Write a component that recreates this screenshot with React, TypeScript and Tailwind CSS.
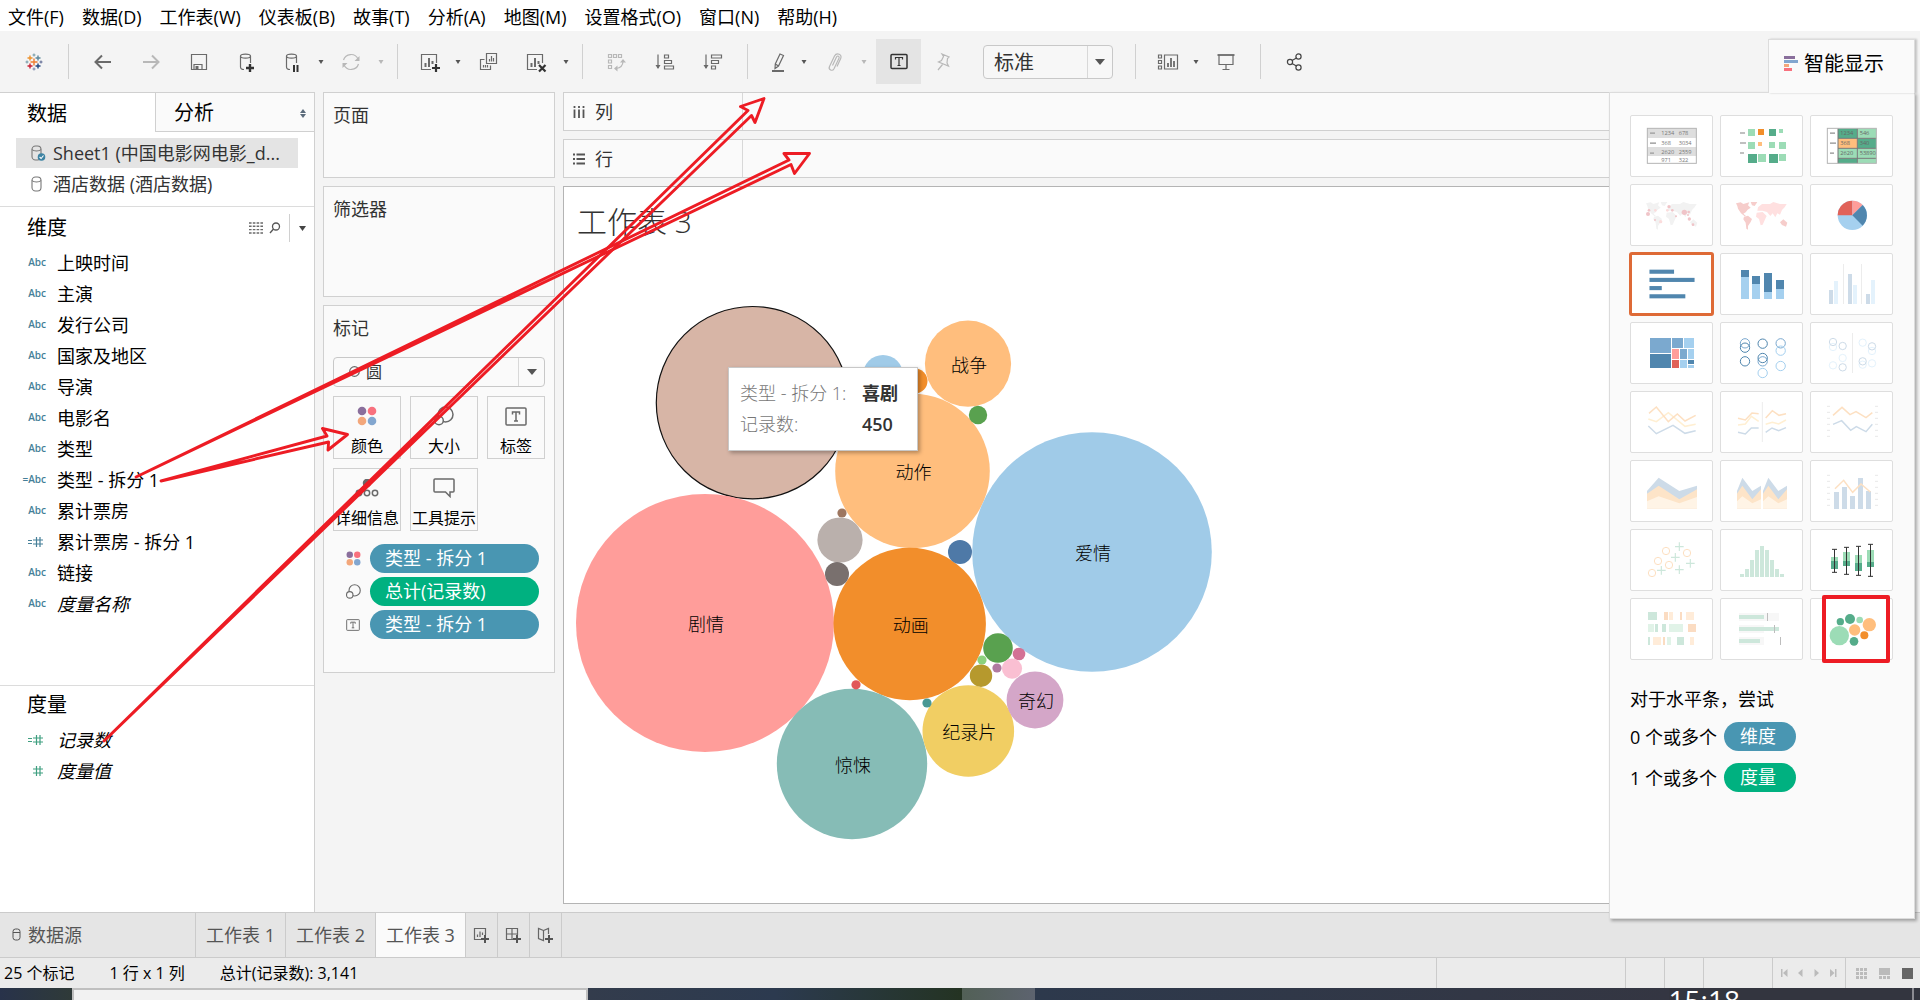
import React from 'react';

const GREY = '#6a6a6a';
const LIGHT = '#b8b8b8';

const menus = [
  '文件(F)',
  '数据(D)',
  '工作表(W)',
  '仪表板(B)',
  '故事(T)',
  '分析(A)',
  '地图(M)',
  '设置格式(O)',
  '窗口(N)',
  '帮助(H)'
];

const dimensions = [
  { name: '上映时间', type: 'abc' },
  { name: '主演', type: 'abc' },
  { name: '发行公司', type: 'abc' },
  { name: '国家及地区', type: 'abc' },
  { name: '导演', type: 'abc' },
  { name: '电影名', type: 'abc' },
  { name: '类型', type: 'abc' },
  { name: '类型 - 拆分 1', type: 'abc', calc: true },
  { name: '累计票房', type: 'abc' },
  { name: '累计票房 - 拆分 1', type: 'num', calc: true },
  { name: '链接', type: 'abc' },
  { name: '度量名称', type: 'abc', italic: true }
];

const measures = [
  { name: '记录数', type: 'num', calc: true, italic: true },
  { name: '度量值', type: 'num', italic: true }
];

const bubbles = [
  { x: 883, y: 375, r: 20, fill: '#a0cbe8' },
  { x: 915, y: 381, r: 12.5, fill: '#f28e2b' },
  { x: 705, y: 623, r: 129, fill: '#ff9d9a', label: '剧情' },
  { x: 912.5, y: 471, r: 77.3, fill: '#ffbe7d', label: '动作' },
  { x: 1092, y: 552, r: 119.8, fill: '#a0cbe8', label: '爱情' },
  { x: 909.7, y: 624, r: 76.2, fill: '#f28e2b', label: '动画' },
  { x: 968, y: 363.7, r: 43.1, fill: '#ffbe7d', label: '战争' },
  { x: 852, y: 764, r: 75.2, fill: '#86bcb6', label: '惊悚' },
  { x: 968.3, y: 731, r: 45.8, fill: '#f1ce63', label: '纪录片' },
  { x: 1035, y: 700, r: 28.4, fill: '#d4a6c8', label: '奇幻' },
  { x: 978, y: 415, r: 9.2, fill: '#59a14f' },
  { x: 842, y: 513, r: 4.6, fill: '#9d7660' },
  { x: 840, y: 540, r: 22.6, fill: '#bab0ac' },
  { x: 837, y: 574, r: 12, fill: '#79706e' },
  { x: 960, y: 552, r: 12, fill: '#4e79a7' },
  { x: 998, y: 648, r: 14.8, fill: '#59a14f' },
  { x: 1019, y: 654, r: 6.3, fill: '#d37295' },
  { x: 1012, y: 668.6, r: 10.1, fill: '#fabfd2' },
  { x: 997, y: 668, r: 4.6, fill: '#b07aa1' },
  { x: 982, y: 660, r: 4.6, fill: '#8cd17d' },
  { x: 981, y: 675.7, r: 11.2, fill: '#b6992d' },
  { x: 856, y: 684.8, r: 4.6, fill: '#e15759' },
  { x: 927, y: 703, r: 4.6, fill: '#499894' }
];

const Svg: React.FC<{ children: React.ReactNode; color?: string }> = ({
  children,
  color = GREY
}) => (
  <svg
    width="24"
    height="24"
    viewBox="0 0 24 24"
    fill="none"
    stroke={color}
    strokeWidth="1.2"
    className="shrink-0"
  >
    {children}
  </svg>
);

const Tool: React.FC<{
  label: string;
  width?: string;
  children: React.ReactNode;
}> = ({ label, width = 'w-12', children }) => (
  <button
    aria-label={label}
    className={`${width} h-[45px] shrink-0 flex items-center justify-center`}
  >
    {children}
  </button>
);

const Caret: React.FC<{ color?: string }> = ({ color = '#555' }) => (
  <span className="w-3 shrink-0 flex justify-center">
    <svg width="6" height="4" viewBox="0 0 6 4" fill={color}>
      <path d="M0.5 0h5L3 4z" />
    </svg>
  </span>
);

const Sep = () => <span className="w-px h-[35px] mx-2.5 shrink-0 bg-[#d0d0d0]" />;

const plus = (x: number, y: number, s: number, color: string, w = 1.4) => (
  <path
    d={`M${x - s} ${y}h${s * 2}M${x} ${y - s}v${s * 2}`}
    stroke={color}
    strokeWidth={w}
  />
);

const ColorDots: React.FC<{ size: number }> = ({ size }) => (
  <svg width={size} height={size} viewBox="0 0 20 20">
    <circle cx="5" cy="5" r="4.3" fill="#8a6f9c" />
    <circle cx="15" cy="5" r="4.3" fill="#f8717e" />
    <circle cx="5" cy="15" r="4.3" fill="#f3a77b" />
    <circle cx="15" cy="15" r="4.3" fill="#82a6cf" />
  </svg>
);

const SizeIcon: React.FC<{ size: number }> = ({ size }) => (
  <svg
    width={size}
    height={size}
    viewBox="0 0 20 20"
    fill="#fafafa"
    stroke={GREY}
    strokeWidth="1.5"
  >
    <circle cx="11.5" cy="8.5" r="7.5" />
    <circle cx="5" cy="14.5" r="4.3" />
  </svg>
);

const TextIcon: React.FC<{ width: number; height: number }> = ({
  width,
  height
}) => (
  <svg
    width={width}
    height={height}
    viewBox="0 0 22 19"
    fill="none"
    stroke={GREY}
    strokeWidth="1.5"
  >
    <rect x="1" y="1" width="20" height="17" rx="1" />
    <path d="M7.5 7.5V5h7v2.5M11 5v9M9 14h4" />
  </svg>
);

const Cylinder: React.FC<{ checked?: boolean }> = ({ checked }) => (
  <svg
    width="16"
    height="18"
    viewBox="0 0 16 18"
    fill="none"
    stroke="#777"
    strokeWidth="1.1"
  >
    <rect x="2" y="2" width="9" height="14" rx="3.5" />
    <path d="M2 5.5c1.500 2 7.500 2 9 0" />
    {checked && (
      <g>
        <circle cx="11.500" cy="13" r="3.800" fill="#3d83a3" stroke="none" />
        <path d="M9.600 13l1.500 1.500 2.400-3" stroke="#fff" />
      </g>
    )}
  </svg>
);

const TypeIcon: React.FC<{ type: string; calc?: boolean; color: string }> = ({
  type,
  calc,
  color
}) =>
  type === 'abc' ? (
    <span className="text-[10px] font-semibold text-[#457f98]">
      {calc ? '=Abc' : 'Abc'}
    </span>
  ) : (
    <svg
      width="21"
      height="14"
      viewBox="0 0 21 14"
      fill="none"
      stroke={color}
      strokeWidth="1.2"
    >
      {calc && <path d="M3 5.500h4M3 8.500h4" />}
      <path d="M8 5h10M8 9h10M11.500 2v10M15 2v10" />
    </svg>
  );

const FieldList: React.FC<{ fields: any[]; color: string }> = ({
  fields,
  color
}) => (
  <ul>
    {fields.map((field) => (
      <li key={field.name} className="h-[31px] flex items-center">
        <span className="w-[46px] flex justify-end">
          <TypeIcon type={field.type} calc={field.calc} color={color} />
        </span>
        <span className={`ml-[11px] text-lg ${field.italic ? 'italic' : ''}`}>
          {field.name}
        </span>
      </li>
    ))}
  </ul>
);

const Pill: React.FC<{ icon: React.ReactNode; color: string; text: string }> = ({
  icon,
  color,
  text
}) => (
  <li className="flex items-center">
    <span className="w-[37px] pl-[13px] flex items-center">{icon}</span>
    <span
      className={`${color} flex-1 h-[29px] mr-[6px] pl-[15px] rounded-full text-lg leading-[28px] text-white`}
    >
      {text}
    </span>
  </li>
);

const MarkButton: React.FC<{
  label: string;
  width?: string;
  children: React.ReactNode;
}> = ({ label, width = 'w-[68px]', children }) => (
  <button
    className={`${width} h-[63px] border border-[#d0d0d0] flex flex-col items-center justify-between pt-2`}
  >
    <span className="h-[22px] flex items-center">{children}</span>
    <span className="text-base leading-6 whitespace-nowrap">{label}</span>
  </button>
);

const continents = (
  <g>
    <path d="M48 58l14-3 8 5 18-5-4 9 8 7-9 6-6 8-7 4 8 7-4 1-11-9-9-14-2-8z" />
    <path d="M92 54h20l-8 12-8-2z" />
    <path d="M72 98l12-3 12 10-4 9-8 12v11l-5-3-2-18-7-10z" />
  </g>
);

const oldWorld = (
  <g>
    <path d="M110 86l18-2 12 12-4 8-8 18-6 2-5-19-9-7z" />
    <path d="M112 80l2-10 12-10h24l10-6 20 6h20l-6 10-8 8-6 14-8-4-6 12-8-12-7 8-10-12-14-4z" />
  </g>
);

const australia = <path d="M180 115l10-9 12 10-4 12-12-5z" />;

const bars = (list: number[][], fill: string) =>
  list.map((b, i) => (
    <rect key={i} x={b[0]} y={b[1]} width={b[2]} height={b[3]} fill={fill} />
  ));

const rings = (list: number[][], stroke: string, r: number, w = 3) =>
  list.map((c, i) => (
    <circle
      key={i}
      cx={c[0]}
      cy={c[1]}
      r={r}
      fill="none"
      stroke={stroke}
      strokeWidth={w}
    />
  ));

const ticks = (
  <path
    d="M51 46h9M51 64h9M51 82h9M51 100h9M51 118h9M51 136h9M195 46h9M195 64h9M195 82h9M195 100h9M195 118h9M195 136h9"
    stroke="#e8e8e8"
    strokeWidth="3"
  />
);

const thumbs = [
  {
    name: '文本表',
    art: (
      <g>
        <rect x="52" y="40" width="147" height="105" fill="#fff" />
        <rect x="52" y="40" width="147" height="29" fill="#dedede" />
        <rect x="52" y="96" width="147" height="27" fill="#dedede" />
        <rect x="52" y="40" width="147" height="105" fill="none" stroke="#b4b4b4" strokeWidth="3" />
        {bars([[60, 52, 15, 5], [60, 82, 18, 5], [60, 112, 12, 5]], '#ababab')}
        <g fontSize="17" fill="#777">
          <text x="94" y="61">1234</text>
          <text x="146" y="61">678</text>
          <text x="94" y="89">368</text>
          <text x="146" y="89">3034</text>
          <text x="94" y="116">2620</text>
          <text x="146" y="116">2559</text>
          <text x="94" y="140">971</text>
          <text x="146" y="140">322</text>
        </g>
      </g>
    )
  },
  {
    name: '热图',
    art: (
      <g>
        {bars([[60, 51, 15, 6], [60, 81, 18, 6], [60, 111, 12, 6]], '#c0c0c0')}
        {bars([[84, 42, 21, 21], [177, 42, 12, 12], [84, 81, 21, 21], [147, 81, 18, 18], [177, 81, 21, 21], [114, 117, 24, 24], [177, 117, 21, 21]], '#9cdcb6')}
        {bars([[147, 42, 21, 21], [84, 117, 27, 27], [147, 117, 27, 27]], '#55ac8a')}
        {bars([[114, 42, 18, 18]], '#f28e2b')}
        {bars([[114, 81, 12, 12]], '#ffbe7d')}
      </g>
    )
  },
  {
    name: '突出显示表',
    art: (
      <g>
        <rect x="52" y="40" width="147" height="105" fill="#fff" />
        {bars([[84, 40, 58, 30], [142, 70, 57, 30], [84, 130, 58, 15]], '#55ac8a')}
        {bars([[142, 40, 57, 30], [84, 100, 58, 30], [142, 100, 57, 30], [142, 130, 57, 15]], '#9cdcb6')}
        {bars([[84, 70, 58, 30]], '#ffbe7d')}
        <path d="M84 40v105M142 40v105M84 70h115M84 100h115M84 130h115" stroke="#777" strokeWidth="3" />
        <rect x="52" y="40" width="147" height="105" fill="none" stroke="#b4b4b4" strokeWidth="3" />
        {bars([[60, 52, 15, 5], [60, 82, 18, 5], [60, 112, 12, 5]], '#ababab')}
        <g fontSize="17" fill="#666">
          <text x="91" y="60">1234</text>
          <text x="149" y="60">546</text>
          <text x="91" y="91">368</text>
          <text x="149" y="91">340</text>
          <text x="91" y="121">2620</text>
          <text x="149" y="121">53890</text>
        </g>
      </g>
    )
  },
  {
    name: '符号地图',
    art: (
      <g fill="#f2f2f2">
        {continents}
        {oldWorld}
        {australia}
        <g fill="#f0c4c8">
          <circle cx="54" cy="90" r="6" />
          <circle cx="57" cy="79" r="4" />
          <circle cx="117" cy="68" r="5" />
          <circle cx="127" cy="79" r="4" />
          <circle cx="163" cy="85" r="8" />
          <circle cx="176" cy="84" r="4" />
          <circle cx="178" cy="105" r="5" />
          <circle cx="189" cy="122" r="4" />
          <circle cx="138" cy="97" r="3" />
          <circle cx="75" cy="108" r="3" />
          <circle cx="174" cy="93" r="3" />
        </g>
        <g fill="#fbdcdc">
          <circle cx="76" cy="79" r="4" />
          <circle cx="112" cy="79" r="4" />
          <circle cx="92" cy="113" r="5" />
        </g>
      </g>
    )
  },
  {
    name: '填充地图',
    art: (
      <g>
        <g fill="#f6cdcb">
          {continents}
          {australia}
        </g>
        <g fill="#ffe0e0">{oldWorld}</g>
      </g>
    )
  },
  {
    name: '饼图',
    art: (
      <g>
        <circle cx="127" cy="94" r="44" fill="#a5d0ef" />
        <path d="M127 94V50a44 44 0 0 0-44 44z" fill="#e16259" />
        <path d="M127 94V50a44 44 0 0 1 31 13z" fill="#ff9d9a" />
        <path d="M127 94l31-31a44 44 0 0 1 0 62z" fill="#5086ae" />
      </g>
    )
  },
  {
    name: '水平条',
    selected: true,
    art: <g>{bars([[60, 51, 72, 12], [60, 75, 132, 12], [60, 99, 36, 12], [60, 123, 105, 12]], '#5086ae')}</g>
  },
  {
    name: '堆叠条',
    art: (
      <g>
        {bars([[63, 51, 24, 21], [96, 69, 24, 24], [132, 60, 24, 57], [168, 81, 24, 27]], '#5086ae')}
        {bars([[63, 72, 24, 66], [96, 93, 24, 45], [132, 117, 24, 21], [168, 108, 24, 30]], '#a5d0ef')}
      </g>
    )
  },
  {
    name: '并排条',
    art: (
      <g>
        {bars([[99, 33, 3, 120], [153, 33, 3, 120]], '#ececec')}
        {bars([[57, 111, 12, 42], [114, 63, 12, 90], [168, 123, 12, 30]], '#cddbe8')}
        {bars([[72, 84, 12, 69], [129, 96, 12, 57], [183, 81, 12, 72]], '#e4f2fc')}
      </g>
    )
  },
  {
    name: '树状图',
    art: (
      <g>
        {bars([[60, 48, 63, 45], [126, 48, 33, 30], [150, 81, 21, 30]], '#7ba9cf')}
        {bars([[60, 96, 63, 42], [174, 114, 18, 12]], '#5086ae')}
        {bars([[162, 48, 30, 30], [174, 81, 18, 30], [150, 114, 21, 24], [174, 129, 18, 9]], '#a5d0ef')}
        {bars([[126, 81, 21, 30]], '#ff9d9a')}
        {bars([[126, 114, 21, 24]], '#e16259')}
      </g>
    )
  },
  {
    name: '圆视图',
    art: (
      <g>
        {rings([[75, 64], [182, 64], [128, 118]], '#7ba9cf', 14)}
        {rings([[182, 86], [182, 132], [128, 153]], '#a5d0ef', 14)}
        {rings([[75, 77], [75, 118], [128, 65], [128, 108]], '#5086ae', 14)}
      </g>
    )
  },
  {
    name: '并排圆',
    art: (
      <g>
        {bars([[126, 33, 3, 120]], '#ececec')}
        {rings([[69, 75], [98, 108], [69, 130], [158, 62], [186, 87], [158, 128], [186, 124]], '#e4f2fc', 11)}
        {rings([[69, 60], [98, 72], [98, 136], [186, 73], [158, 118]], '#cddbe8', 11)}
      </g>
    )
  },
  {
    name: '连续线',
    art: (
      <g fill="none" strokeWidth="4.500">
        <path d="M55 84l24 8 36-27 50 41 32-6" stroke="#ffefd2" />
        <path d="M57 67l22-19 36 44 27-23 23 21 32-17" stroke="#fde0c2" />
        <path d="M55 105l24 23 50-25 36 24 32-8" stroke="#cddbe8" />
      </g>
    )
  },
  {
    name: '离散线',
    art: (
      <g fill="none" strokeWidth="4.500">
        <path d="M127 33v120" stroke="#ececec" strokeWidth="3" />
        <path d="M54 102l22-3 18-23 22 15M137 100l20-6 19 5 22-12" stroke="#ffefd2" />
        <path d="M54 82l22 5 20-21 20 2M137 81l20-22 20 14 21-5" stroke="#fde0c2" />
        <path d="M54 124l22 5 18-18h22M137 124l19-13 20 8 22-9" stroke="#cddbe8" />
      </g>
    )
  },
  {
    name: '双线',
    art: (
      <g fill="none" strokeWidth="4.500">
        {ticks}
        <path d="M69 73l27-24 24 22 18-9 30 18 19-15" stroke="#fde0c2" />
        <path d="M69 100l26-11 27 29 17-11 29 15 19-22" stroke="#cddbe8" />
      </g>
    )
  },
  {
    name: '连续面积图',
    art: (
      <g>
        <path d="M51 93l35-40 62 40 53-16v69H51z" fill="#cddbe8" />
        <path d="M51 101l35-24 62 41 53-30v58H51z" fill="#fde4c8" />
        <path d="M51 124l35-15 62 21 53-19v35H51z" fill="#fff4e6" />
      </g>
    )
  },
  {
    name: '离散面积图',
    art: (
      <g>
        <path d="M51 93l16-40 30 40 26-16v69H51zM129 93l16-40 30 40 26-16v69h-72z" fill="#cddbe8" />
        <path d="M51 101l16-24 30 41 26-30v58H51zM129 101l16-24 30 41 26-30v58h-72z" fill="#fde4c8" />
        <path d="M51 124l16-15 30 21 26-12v28H51zM129 124l16-15 30 21 26-12v28h-72z" fill="#fff4e6" />
      </g>
    )
  },
  {
    name: '双组合',
    art: (
      <g fill="none">
        {ticks}
        {bars([[72, 96, 15, 51], [96, 81, 15, 66], [120, 108, 15, 39], [144, 54, 15, 93], [168, 93, 15, 54]], '#cddbe8')}
        <path d="M75 86l26-25 27 36 25-25 28 24" stroke="#fde0c2" strokeWidth="4.500" />
      </g>
    )
  },
  {
    name: '散点图',
    art: (
      <g>
        {rings([[108, 66], [171, 72], [84, 96], [117, 108], [66, 132]], '#fde0c2', 11)}
        <path
          d="M135 53h26M148 40v26M123 85h26M136 72v26M168 103h26M181 90v26M135 122h26M148 109v26M81 124h26M94 111v26"
          stroke="#cde7db"
          strokeWidth="3.500"
        />
      </g>
    )
  },
  {
    name: '直方图',
    art: (
      <g>
        {bars([[60, 135, 12, 9], [75, 120, 12, 24], [90, 93, 12, 51], [105, 63, 12, 81], [120, 51, 12, 93], [135, 63, 12, 81], [150, 93, 12, 51], [165, 120, 12, 24], [180, 135, 12, 9]], '#cde7db')}
      </g>
    )
  },
  {
    name: '盒须图',
    art: (
      <g>
        {bars([[63, 84, 21, 12], [99, 69, 21, 27], [135, 78, 21, 24], [171, 63, 21, 36]], '#9cdcb6')}
        {bars([[63, 96, 21, 24], [99, 96, 21, 15], [135, 102, 21, 24], [171, 99, 21, 15]], '#55ac8a')}
        <path
          d="M66 61h15M73.500 61v69M66 130h15M102 55h15M109.500 55v81M102 136h15M138 52h15M145.500 52v87M138 139h15M174 46h15M181.500 46v96M174 142h15"
          stroke="#333"
          strokeWidth="3"
        />
      </g>
    )
  },
  {
    name: '甘特图',
    art: (
      <g>
        {bars([[54, 42, 27, 24], [75, 78, 9, 24], [96, 78, 12, 24], [54, 117, 6, 24], [141, 117, 21, 24]], '#cde7db')}
        {bars([[54, 78, 18, 24], [117, 78, 42, 24], [111, 117, 12, 24]], '#e1f3e8')}
        {bars([[102, 42, 12, 24], [150, 42, 6, 24], [174, 78, 24, 24], [99, 117, 6, 24]], '#fbdcc2')}
        {bars([[117, 42, 12, 24], [168, 42, 24, 24], [69, 117, 24, 24], [180, 117, 12, 24]], '#ffecd9')}
      </g>
    )
  },
  {
    name: '靶心图',
    art: (
      <g>
        {bars([[57, 45, 120, 24], [57, 81, 75, 24], [57, 117, 75, 24]], '#f7f7f7')}
        {bars([[57, 51, 75, 12], [57, 87, 120, 12], [57, 123, 63, 12]], '#cde7db')}
        {bars([[141, 45, 3, 24], [162, 81, 3, 24], [180, 117, 3, 24]], '#bdbdbd')}
      </g>
    )
  },
  {
    name: '填充气泡图',
    marked: true,
    art: (
      <g>
        <circle cx="88" cy="113" r="29" fill="#9cdcb6" />
        <circle cx="149" cy="66" r="10" fill="#9cdcb6" />
        <circle cx="91" cy="71" r="11" fill="#55ac8a" />
        <circle cx="120" cy="63" r="15" fill="#55ac8a" />
        <circle cx="132" cy="130" r="13" fill="#55ac8a" />
        <circle cx="134" cy="96" r="17" fill="#ffbe7d" />
        <circle cx="178" cy="80" r="20" fill="#ffbe7d" />
        <circle cx="163" cy="112" r="12" fill="#f28e2b" />
      </g>
    )
  }
];

const Toolbar = () => (
  <div className="h-[61px] pl-2.5 flex items-center bg-[#f4f4f4]">
    <Tool label="Tableau">
      <Svg>
        {plus(12, 12, 3.5, '#ee7d31')}
        {plus(8, 8, 2.5, '#eb912c')}
        {plus(16, 8, 2.5, '#5b879b')}
        {plus(8, 16, 2.5, '#c72035')}
        {plus(16, 16, 2.5, '#1f447e')}
        {plus(12, 5, 1.5, '#7099a6', 1)}
        {plus(12, 19, 1.5, '#7b86aa', 1)}
        {plus(5, 12, 1.5, '#7099a6', 1)}
        {plus(19, 12, 1.5, '#59658f', 1)}
      </Svg>
    </Tool>
    <Sep />
    <Tool label="后退">
      <Svg>
        <path d="M20 12H5M11 5.500L4.500 12l6.500 6.500" strokeWidth="2" />
      </Svg>
    </Tool>
    <Tool label="前进">
      <Svg color={LIGHT}>
        <path d="M4 12h15M13 5.500l6.500 6.500-6.500 6.500" strokeWidth="2" />
      </Svg>
    </Tool>
    <Tool label="保存">
      <Svg>
        <path d="M4.500 4.500h15v15h-15zM7 19v-4.500h8V19" />
        <rect x="8.500" y="16" width="3" height="3" fill={GREY} stroke="none" />
      </Svg>
    </Tool>
    <Tool label="新建数据源">
      <Svg>
        <path d="M9 19.500c-2 0-3.500-1-3.500-2.500V6c0-2.600 10-2.600 10 0v7M5.500 6c0 2.800 10 2.800 10 0" />
        {plus(15, 18, 4, '#333', 2.4)}
      </Svg>
    </Tool>
    <Tool label="暂停自动更新" width="w-11">
      <Svg>
        <path d="M9 19.500c-2 0-3.500-1-3.500-2.500V6c0-2.600 10-2.600 10 0v7M5.500 6c0 2.800 10 2.800 10 0" />
        <path d="M13 15v7M16.500 15v7" stroke="#333" strokeWidth="2" />
      </Svg>
    </Tool>
    <Caret />
    <Tool label="运行更新">
      <Svg color={LIGHT}>
        <path d="M4.500 10a7.800 7.800 0 0 1 14.500-1M19.500 14A7.800 7.800 0 0 1 5 15" />
        <path d="M20.500 6v5h-5zM3.500 18v-5h5z" fill={LIGHT} stroke="none" />
      </Svg>
    </Tool>
    <Caret color={LIGHT} />
    <Sep />
    <Tool label="新建工作表" width="w-11">
      <Svg>
        <path d="M13 19.500H3.500v-15h15V13" />
        <path d="M7.500 17v-4M11 17V8M14.500 14v-3" strokeWidth="2" />
        {plus(18, 18, 4, '#333', 2.2)}
      </Svg>
    </Tool>
    <Caret />
    <Tool label="复制">
      <Svg>
        <path d="M10.500 3.500h10v10h-10zM13.500 11.500V9M15.500 11.500V6M17.500 11.500V8M8.500 9.500h-4v10h10v-4M7.500 17.500V15M9.500 17.500V15M11.500 17.500V15" />
      </Svg>
    </Tool>
    <Tool label="清除工作表">
      <Svg>
        <path d="M13 19.500H3.500v-15h15V13" />
        <path d="M7.500 17v-4M11 17V8M14.500 14v-3" strokeWidth="2" />
        <path d="M15 15l6.500 6.500M21.500 15L15 21.500" stroke="#333" strokeWidth="2.200" />
      </Svg>
    </Tool>
    <Caret />
    <Sep />
    <Tool label="交换行和列">
      <Svg color={LIGHT}>
        <path d="M3.500 4.500h3v3h-3zM8.500 4.500h3v3h-3zM13.500 4.500h3v3h-3zM3.500 10h3v3h-3zM3.500 15.500h3v3h-3zM18 11c0 5-3 7-7 7.500" />
        <path d="M15 12.500h6L18 9zM12.500 15.500v6L9 18.500z" fill={LIGHT} stroke="none" />
      </Svg>
    </Tool>
    <Tool label="升序排序">
      <Svg>
        <path d="M5 4.500V18M11.500 5h4v3h-4zM11.500 10.500h7v3h-7zM11.500 16h9v3h-9z" />
        <path d="M2.500 15h5L5 19z" fill={GREY} stroke="none" />
      </Svg>
    </Tool>
    <Tool label="降序排序">
      <Svg>
        <path d="M5 4.500V18M10.500 5h10v3h-10zM10.500 10.500h7v3h-7zM10.500 16h4v3h-4z" />
        <path d="M2.500 15h5L5 19z" fill={GREY} stroke="none" />
      </Svg>
    </Tool>
    <Sep />
    <Tool label="突出显示" width="w-10">
      <Svg>
        <path d="M14 4l3.500 1.500L12.500 16 9 18.500l.3-4.500zM9.300 14l3.200 2" />
        <path d="M6 21h12" strokeWidth="2" />
      </Svg>
    </Tool>
    <Caret />
    <Tool label="组成员">
      <Svg color={LIGHT}>
        <path d="M10.500 15.500l4-8.500c1-1.900 3.400-.7 2.500 1.200l-5 10.500c-1.600 3-6 1-4.500-2.200L12.500 6c2.300-4 8-1.500 6.200 2.500L15 16.500" />
      </Svg>
    </Tool>
    <Caret color={LIGHT} />
    <button
      aria-label="显示标记标签"
      className="ml-1.5 w-[45px] h-[45px] shrink-0 bg-[#e4e4e4] flex items-center justify-center"
    >
      <Svg color="#333">
        <rect x="4" y="4.500" width="16" height="14" rx="1" strokeWidth="1.500" />
        <path d="M8.500 9.500v-2h7v2M12 7.500v8M10.500 15.500h3" />
      </Svg>
    </button>
    <Tool label="固定轴" width="w-11">
      <Svg color={LIGHT}>
        <path d="M11 4l7 3-1.500 1.500-.5 4.500 1.500 3-10-4 3-1.500 2-4zM11.500 14.500L7 20" />
      </Svg>
    </Tool>
    <div className="relative ml-[18px] mr-3 w-[130px] shrink-0">
      <select
        aria-label="适合"
        className="appearance-none w-full h-[34px] pt-0.5 pl-2.5 border border-[#c8c8c8] rounded-sm bg-[#f7f7f7] text-xl leading-7 text-[#333]"
      >
        <option>标准</option>
      </select>
      <span className="absolute right-px top-px h-8 w-[25px] border-l border-[#d8d8d8] flex items-center justify-center pointer-events-none">
        <svg width="10" height="6" viewBox="0 0 10 6" fill="#555">
          <path d="M0 0h10L5 6z" />
        </svg>
      </span>
    </div>
    <Sep />
    <Tool label="显示/隐藏卡" width="w-11">
      <Svg>
        <path d="M2.500 5h3v3h-3zM2.500 10.500h3v3h-3zM2.500 16h3v3h-3zM8.500 5h13v14h-13z" />
        <path d="M12 17v-4M15 17V8M18 17v-6" strokeWidth="1.800" />
      </Svg>
    </Tool>
    <Caret />
    <Tool label="演示模式" width="w-12">
      <Svg>
        <path d="M3.500 5h17" strokeWidth="1.800" />
        <path d="M5 5v9.500h14V5M12 14.500V19M8.500 19.500h7" />
      </Svg>
    </Tool>
    <Sep />
    <Tool label="共享">
      <Svg color="#444">
        <circle cx="7" cy="12" r="2.600" />
        <circle cx="15.500" cy="6.500" r="2.600" />
        <circle cx="15.500" cy="17.500" r="2.600" />
        <path d="M9 10.500L13.500 8M9 13.500l4.500 2.500" />
      </Svg>
    </Tool>
  </div>
);

const DataPane = () => (
  <aside className="w-[315px] shrink-0 bg-white border-t border-r border-[#d0d0d0] flex flex-col">
    <div className="flex h-[39px] text-xl">
      <button className="w-[155px] pt-0.5 pl-[27px] text-left">数据</button>
      <button className="flex-1 pt-0.5 pl-[18px] pr-2 flex items-center justify-between bg-[#fafafa] border-l border-b border-[#d0d0d0]">
        分析
        <svg width="6" height="9" viewBox="0 0 6 9" fill="#5b6b7b">
          <path d="M0 4l3-4 3 4zM0 5h6L3 9z" />
        </svg>
      </button>
    </div>
    <ul className="h-[74px] pt-1.5 text-lg text-[#333]">
      <li className="ml-4 mr-4 h-[30px] pl-3.5 flex items-center gap-[7px] bg-[#e4e4e4]">
        <Cylinder checked />
        Sheet1 (中国电影网电影_d...
      </li>
      <li className="ml-4 h-8 pl-3.5 flex items-center gap-[7px]">
        <Cylinder />
        酒店数据 (酒店数据)
      </li>
    </ul>
    <section className="flex-1 border-t border-[#dcdcdc]">
      <div className="h-10 pt-0.5 pl-[27px] pr-1.5 flex items-center">
        <h2 className="flex-1 text-xl">维度</h2>
        <button aria-label="查看数据" className="mr-1.5">
          <svg width="14" height="12" viewBox="0 0 14 12" stroke={GREY} strokeWidth="1.400">
            <path d="M0 1h14M0 4.300h14M0 7.600h14M0 11h14" strokeDasharray="2.600 1.200" />
          </svg>
        </button>
        <button aria-label="搜索" className="mr-2">
          <svg width="12" height="12" viewBox="0 0 12 12" fill="none" stroke="#555" strokeWidth="1.300">
            <circle cx="7" cy="4.500" r="3.500" />
            <path d="M4.500 7L1 11" />
          </svg>
        </button>
        <span className="w-px h-7 bg-[#d0d0d0] mr-1.5" />
        <button aria-label="菜单" className="w-3 flex justify-center">
          <svg width="7" height="5" viewBox="0 0 7 5" fill="#444">
            <path d="M0 0h7L3.500 5z" />
          </svg>
        </button>
      </div>
      <FieldList fields={dimensions} color="#457f98" />
    </section>
    <section className="h-[227px] border-t border-[#dcdcdc]">
      <div className="h-[38px] pl-[27px] flex items-center">
        <h2 className="text-xl">度量</h2>
      </div>
      <FieldList fields={measures} color="#3f9f80" />
    </section>
  </aside>
);

const Cards = () => (
  <div className="w-[232px] shrink-0 flex flex-col gap-2 text-lg leading-[26px] text-[#333]">
    <section className="h-[86px] px-[9px] pt-[9px] border border-[#d0d0d0] bg-[#fafafa]">
      页面
    </section>
    <section className="h-[111px] px-[9px] pt-[9px] border border-[#d0d0d0] bg-[#fafafa]">
      筛选器
    </section>
    <section className="h-[368px] px-[9px] pt-[9px] border border-[#d0d0d0] bg-[#fafafa]">
      <h2>标记</h2>
      <div className="relative mt-4">
        <select
          aria-label="标记类型"
          className="appearance-none w-full h-[30px] pl-8 border border-[#c8c8c8] rounded-sm bg-[#fafafa] text-base leading-6"
        >
          <option>圆</option>
        </select>
        <svg className="absolute left-4 top-[9px]" width="11" height="11" viewBox="0 0 11 11" fill="none" stroke={GREY} strokeWidth="1.200">
          <circle cx="5.500" cy="5.500" r="4.800" />
        </svg>
        <span className="absolute right-px top-px h-7 w-[26px] border-l border-[#d8d8d8] flex items-center justify-center pointer-events-none">
          <svg width="10" height="6" viewBox="0 0 10 6" fill="#555">
            <path d="M0 0h10L5 6z" />
          </svg>
        </span>
      </div>
      <div className="mt-[9px] flex flex-wrap gap-[9px] text-black">
        <MarkButton label="颜色">
          <ColorDots size={20} />
        </MarkButton>
        <MarkButton label="大小">
          <SizeIcon size={20} />
        </MarkButton>
        <MarkButton label="标签" width="w-[58px]">
          <TextIcon width={22} height={19} />
        </MarkButton>
        <MarkButton label="详细信息">
          <svg width="24" height="18" viewBox="0 0 24 18" fill="none" stroke={GREY} strokeWidth="1.500">
            <circle cx="12" cy="4" r="3.500" fill={GREY} />
            <circle cx="4" cy="14" r="2.700" />
            <circle cx="12" cy="14" r="2.700" />
            <circle cx="20" cy="14" r="2.700" />
          </svg>
        </MarkButton>
        <MarkButton label="工具提示">
          <svg width="22" height="20" viewBox="0 0 22 20" fill="none" stroke={GREY} strokeWidth="1.500">
            <path d="M2 1h18q1 0 1 1v11q0 1-1 1h-3v4.500L12.500 14H2q-1 0-1-1V2q0-1 1-1z" />
          </svg>
        </MarkButton>
      </div>
      <ul className="mt-[13px] flex flex-col gap-1">
        <Pill icon={<ColorDots size={15} />} color="bg-[#4996b2]" text="类型 - 拆分 1" />
        <Pill icon={<SizeIcon size={15} />} color="bg-[#00b180]" text="总计(记录数)" />
        <Pill icon={<TextIcon width={14} height={12} />} color="bg-[#4996b2]" text="类型 - 拆分 1" />
      </ul>
    </section>
  </div>
);

const Shelf: React.FC<{ label: string; path: string }> = ({ label, path }) => (
  <div className="h-[39px] flex border border-[#d0d0d0] bg-[#fafafa] text-lg text-[#333]">
    <span className="w-[179px] pl-[9px] flex items-center gap-2.5 border-r border-[#d8d8d8]">
      <svg width="12" height="12" viewBox="0 0 12 12" stroke="#555" strokeWidth="1.800">
        <path d={path} />
      </svg>
      {label}
    </span>
  </div>
);

const Sheet = () => (
  <main className="flex-1 min-w-0 pr-3 flex flex-col gap-2">
    <Shelf label="列" path="M1.500 0v2M1.500 3.500V12M6 0v2M6 3.500V12M10.500 0v2M10.500 3.500V12" />
    <Shelf label="行" path="M0 1.500h2M3.500 1.500H12M0 6h2M3.500 6H12M0 10.500h2M3.500 10.500H12" />
    <div className="relative flex-1 pt-[15px] pl-[13px] bg-white border border-[#b4b4b4]">
      <h1 className="text-3xl leading-10 font-light text-[#333]">工作表 3</h1>
      <svg
        className="absolute left-0 top-0"
        width="660"
        height="700"
        viewBox="564 187 660 700"
        fontSize="18"
        fontWeight="300"
        fill="#000"
        textAnchor="middle"
      >
        <circle cx="752.500" cy="402.700" r="96.200" fill="#d7b5a6" stroke="#111" strokeWidth="1.200" />
        {bubbles.map((b) => (
          <circle key={`${b.x}-${b.y}`} cx={b.x} cy={b.y} r={b.r} fill={b.fill} />
        ))}
        {bubbles
          .filter((b) => b.label)
          .map((b) => (
            <text key={b.label} x={b.x + 1} y={b.y + 8}>
              {b.label}
            </text>
          ))}
      </svg>
      <dl className="absolute left-[164px] top-[180px] w-[190px] h-[84px] pl-[11px] pt-[9px] grid grid-cols-[122px_auto] auto-rows-[31px] items-center content-start bg-white border border-[#c8c8c8] shadow-[2px_2px_4px_rgba(0,0,0,0.3)] text-lg whitespace-nowrap">
        <dt className="font-light text-[#777]">类型 - 拆分 1:</dt>
        <dd className="font-bold text-[#333]">喜剧</dd>
        <dt className="font-light text-[#777]">记录数:</dt>
        <dd className="font-semibold text-[#333]">450</dd>
      </dl>
    </div>
  </main>
);

const ShowMe = () => (
  <div className="absolute right-[5px] top-[39px] h-[880px] w-[306px] flex flex-col text-lg">
    <button className="relative z-10 self-end w-[147px] h-[54px] pl-[15px] pb-1.5 -mb-px flex items-center gap-1.5 bg-[#fafafa] border border-b-0 border-[#dcdcdc] text-xl shadow-[2px_0_2px_rgba(0,0,0,0.2)]">
      <svg width="14" height="16" viewBox="0 0 14 16">
        <rect y="0" width="11" height="3" fill="#8a6f9c" />
        <rect y="4" width="14" height="3" fill="#82a6cf" />
        <rect y="8" width="5" height="3" fill="#f3a77b" />
        <rect y="12" width="8" height="3" fill="#f8717e" />
      </svg>
      智能显示
    </button>
    <section className="flex-1 pl-5 pt-[22px] bg-[#fafafa] border border-[#dcdcdc] shadow-[2px_2px_3px_rgba(0,0,0,0.3)]">
      <div className="grid grid-cols-[83px_83px_83px] gap-[7px]">
        {thumbs.map((thumb) => (
          <button
            key={thumb.name}
            aria-label={thumb.name}
            className={`relative h-[62px] bg-white rounded-xs ${
              thumb.selected
                ? 'outline-3 -outline-offset-2 outline-[#de6a36]'
                : 'border border-[#dedede]'
            }`}
          >
            <svg className="w-full h-full" viewBox="3 3 243 180">
              {thumb.art}
            </svg>
            {thumb.marked && (
              <span className="absolute left-[11px] -top-1 w-[68px] h-[68px] border-4 border-[#ed1c24] rounded-xs" />
            )}
          </button>
        ))}
      </div>
      <p className="mt-[26px] leading-[26px]">对于水平条，尝试</p>
      <p className="mt-2.5 h-[29px] flex items-center gap-[7px]">
        0 个或多个
        <span className="w-[72px] h-[29px] rounded-full bg-[#4996b2] text-white text-center leading-[28px] pr-1">
          维度
        </span>
      </p>
      <p className="mt-3 h-[29px] flex items-center gap-[7px]">
        1 个或多个
        <span className="w-[72px] h-[29px] rounded-full bg-[#00b180] text-white text-center leading-[28px] pr-1">
          度量
        </span>
      </p>
    </section>
  </div>
);

const BottomTabs = () => (
  <nav className="h-[46px] flex bg-[#e5e5e5] border-t border-b border-[#cbcbcb] text-lg text-[#555]">
    <button className="w-[196px] pl-3 flex items-center gap-[7px] border-r border-[#cbcbcb]">
      <svg width="9" height="14" viewBox="0 0 9 14" fill="none" stroke="#555">
        <rect x="1" y="1" width="7" height="11" rx="2.500" />
        <path d="M1 4.500h7" />
      </svg>
      数据源
    </button>
    <button className="px-2.5 border-r border-[#cbcbcb]">工作表 1</button>
    <button className="px-2.5 border-r border-[#cbcbcb]">工作表 2</button>
    <button className="px-2.5 border-r border-[#cbcbcb] bg-[#fafafa]">工作表 3</button>
    <button aria-label="新建工作表" className="w-8 flex items-center justify-center border-r border-[#cbcbcb]">
      <svg width="16" height="16" viewBox="0 0 16 16" fill="none" stroke="#666" strokeWidth="1.200">
        <path d="M9 12.500H1.500V1.500h11V8M4.500 10V7.500M7 10V4.500M9.500 8V5.500" />
        {plus(12, 12, 4, '#555', 2)}
      </svg>
    </button>
    <button aria-label="新建仪表板" className="w-8 flex items-center justify-center border-r border-[#cbcbcb]">
      <svg width="16" height="16" viewBox="0 0 16 16" fill="none" stroke="#666" strokeWidth="1.200">
        <path d="M8 12.500H1.500V1.500h11V8M7 1.500v11M1.500 7h11" />
        {plus(12, 12, 4, '#555', 2)}
      </svg>
    </button>
    <button aria-label="新建故事" className="w-8 flex items-center justify-center border-r border-[#cbcbcb]">
      <svg width="16" height="16" viewBox="0 0 16 16" fill="none" stroke="#666" strokeWidth="1.200">
        <path d="M6.500 3.500L1.500 1.500v10l5 2zM6.500 3.500l5-2V7M6.500 13.500V3.500" />
        {plus(12, 12, 4, '#555', 2)}
      </svg>
    </button>
  </nav>
);

const StatusBar = () => (
  <footer className="h-[30px] pl-1 flex items-center bg-[#ebebeb] text-base">
    <span className="mr-[35px]">25 个标记</span>
    <span className="mr-[35px]">1 行 x 1 列</span>
    <span className="flex-1">总计(记录数): 3,141</span>
    <span className="w-[189px] h-full border-l border-[#cbcbcb]" />
    <span className="w-[39px] h-full border-l border-[#cbcbcb]" />
    <span className="w-[39px] h-full border-l border-[#cbcbcb]" />
    <span className="w-[69px] h-full border-l border-[#cbcbcb]" />
    <span className="w-[73px] h-full border-l border-[#cbcbcb] flex items-center justify-center">
      <svg width="56" height="8" viewBox="0 0 56 8" fill="#bbb">
        <path d="M0 0h1.500v8H0zM6.500 0v8L2 4zM21.500 0v8L17 4zM33.500 0v8L38 4zM49 0v8l4.500-4zM54 0h1.500v8H54z" />
      </svg>
    </span>
    <span className="w-[75px] h-full border-l border-[#cbcbcb] flex items-center gap-3 pl-[10px]">
      <svg width="11" height="11" viewBox="0 0 11 11" fill="#bbb">
        <path d="M0 0h3v3H0zM4 0h3v3H4zM8 0h3v3H8zM0 4h3v3H0zM4 4h3v3H4zM8 4h3v3H8zM0 8h3v3H0zM4 8h3v3H4zM8 8h3v3H8z" />
      </svg>
      <svg width="11" height="11" viewBox="0 0 11 11" fill="#bbb">
        <path d="M0 0h11v7H0zM0 8h3v3H0zM4 8h3v3H4zM8 8h3v3H8z" />
      </svg>
      <span className="w-[11px] h-[11px] bg-[#666]" />
    </span>
  </footer>
);

const Taskbar = () => (
  <div className="h-3 flex overflow-hidden bg-[#33353f]">
    <span className="w-[72px] bg-linear-to-r from-[#28324a] to-[#2f3a38]" />
    <span className="w-[516px] bg-[#f2f2f2] border-t-2 border-x-2 border-[#bfbfbf]" />
    <span className="w-[374px] bg-linear-to-r from-[#333c4c] via-[#2c3a4f] to-[#243322]" />
    <span className="w-[73px] bg-linear-to-r from-[#526056] to-[#5d636f]" />
    <span className="flex-1 bg-linear-to-r from-[#2d394c] to-[#343642]" />
    <span className="mr-[172px] text-[28px] leading-[25px] text-white">15:18</span>
    <span className="w-[2px] mr-1.5 bg-[#8b8b92]" />
  </div>
);

const Arrows = () => (
  <svg
    className="absolute left-0 top-0 pointer-events-none"
    width="820"
    height="760"
    viewBox="0 0 820 760"
    fill="none"
    stroke="#ed1c24"
    strokeWidth="2.900"
    strokeLinejoin="round"
  >
    <path d="M136 477L789 160l-5-6.500 25.500 0-15 20-3.500-9z" />
    <path d="M104 741L748 110.500l-7.500-4 23.500-8-9 24-3.500-7z" />
    <path d="M161 481l166-45-4.500-7.500 25 6-19.500 15.500.6-8z" />
  </svg>
);

const App: React.FC = () => {
  return (
    <div className="relative min-h-screen flex flex-col overflow-hidden bg-[#f4f4f4] text-black font-['Open_Sans','Noto_Sans_CJK_SC',sans-serif]">
      <nav className="h-[31px] pl-2 pb-px flex items-center gap-[18px] bg-white text-lg leading-none">
        {menus.map((menu) => (
          <button key={menu} className="whitespace-nowrap pt-[3px]">
            {menu}
          </button>
        ))}
      </nav>
      <Toolbar />
      <div className="flex-1 flex">
        <DataPane />
        <div className="flex-1 min-w-0 pl-2 pb-2 flex gap-2">
          <Cards />
          <Sheet />
        </div>
      </div>
      <BottomTabs />
      <StatusBar />
      <Taskbar />
      <ShowMe />
      <Arrows />
    </div>
  );
};

export default App;
